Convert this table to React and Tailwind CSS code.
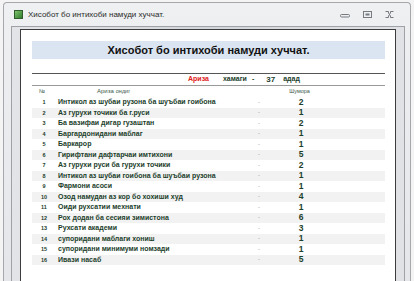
import React from 'react';

const rows = [
  ['Интикол аз шубаи рузона ба шуъбаи гоибона', 2],
  ['Аз гурухи точики ба г.руси', 1],
  ['Ба вазифаи дигар гузаштан', 2],
  ['Баргардонидани маблаг', 1],
  ['Баркарор', 1],
  ['Гирифтани дафтарчаи имтихони', 5],
  ['Аз гурухи руси ба гурухи точики', 2],
  ['Интикол аз шубаи гоибона ба шуъбаи рузона', 1],
  ['Фармони асоси', 1],
  ['Озод намудан аз кор бо хохиши худ', 4],
  ['Оиди рухсатии мехнати', 1],
  ['Рох додан ба сесияи зимистона', 6],
  ['Рухсати академи', 3],
  ['супоридани маблаги хониш', 1],
  ['супоридани минимуми номзади', 1],
  ['Ивази насаб', 5],
];

const green = 'text-[#1c402b]';

const App = () => {
  return (
    <div className="w-[414px] h-[281px] overflow-hidden bg-[#f4f4f4] pt-[2px] pl-[3px] pr-[3px] font-['Liberation_Sans',sans-serif]">
      <div className="h-[279px] flex flex-col rounded-t-[4px] border border-b-0 border-[#a6a8ab] bg-gradient-to-b from-[#eef0f2] to-[#e4e6e9]">
        {/* title bar */}
        <div className="h-[23px] shrink-0 flex items-center pl-[10px] pr-[15px]">
          <div className="w-[9px] h-[9px] border border-[#2f5e2a] bg-gradient-to-br from-[#7fc46f] to-[#2f7d2c]" />
          <span className="ml-[5px] text-[8px] text-[#2b2b2b]">Хисобот бо интихоби намуди хуччат.</span>
          <div className="ml-auto flex items-center gap-[11px]">
            <svg width="12" height="8" viewBox="0 0 12 8">
              <rect x="1.5" y="3.5" width="9" height="2.5" rx="1" fill="none" stroke="#777b80" />
            </svg>
            <svg width="11" height="9" viewBox="0 0 11 9">
              <rect x="1.5" y="1.5" width="8" height="6" fill="none" stroke="#777b80" />
              <rect x="3.5" y="3.5" width="4" height="2" fill="#777b80" />
            </svg>
            <svg width="11" height="9" viewBox="0 0 11 9">
              <path d="M1.5 1.5h3v1.5M9.5 1.5h-3v1.5M1.5 7.5h3V6M9.5 7.5h-3V6M4.5 3L6.5 6M6.5 3L4.5 6" fill="none" stroke="#777b80" />
            </svg>
          </div>
        </div>

        {/* inner frame */}
        <div className="flex-1 flex ml-[7px] mr-[5px] border border-b-0 border-[#9ea2a7] bg-gradient-to-r from-[#e2e4e7] via-[#d3d6da] to-[#e0e2e5] pt-[2px] px-[8px]">
          <div className="flex-1 bg-white border-l border-t border-r border-[#3c3c3c] pl-[11px] pr-[10px] pt-[11px]">
            <div className="h-[18px] bg-[#dbe5f1] flex items-center justify-center">
              <span className="text-[11px] font-bold text-[#111]">Хисобот бо интихоби намуди хуччат.</span>
            </div>

            <div className="mt-[14px] border-t-[1.5px] border-[#555]" />

            <div className="h-[11px] flex items-center text-[7px] font-bold">
              <span className="ml-[156px] text-[#e02020]">Ариза</span>
              <span className={`ml-[14px] ${green}`}>хамаги</span>
              <span className={`ml-[5px] ${green}`}>-</span>
              <span className={`ml-[12px] text-[8px] ${green}`}>37</span>
              <span className={`ml-[8px] ${green}`}>адад</span>
            </div>

            <div className="border-t border-[#9a9a9a]" />

            <div className="h-[10px] flex items-center text-[5.5px] text-[#3d5a49]">
              <span className="w-[20px] text-center">№</span>
              <span className="ml-[45px] text-[6px]">Ариза</span>
              <span className="ml-[2px]">ондиг</span>
              <span className="ml-[159px]">Шумора</span>
            </div>

            <div className="mt-[1px]">
              {rows.map(([name, count], i) => (
                <div
                  key={i}
                  className={`h-[10.5px] flex items-center ${i % 2 === 1 ? 'bg-[#f2f2f2]' : 'bg-white'}`}
                >
                  <span className={`w-[24px] text-center text-[5.5px] font-bold ${green}`}>{i + 1}</span>
                  <span className={`w-[194px] pl-[2px] text-[7px] font-bold whitespace-nowrap ${green}`}>{name}</span>
                  <span className="w-[18px] text-center text-[6px] text-[#9a9a9a]">-</span>
                  <span className={`w-[66px] text-center text-[8.5px] font-bold ${green}`}>{count}</span>
                </div>
              ))}
            </div>
          </div>
        </div>
      </div>
    </div>
  );
};

export default App;
